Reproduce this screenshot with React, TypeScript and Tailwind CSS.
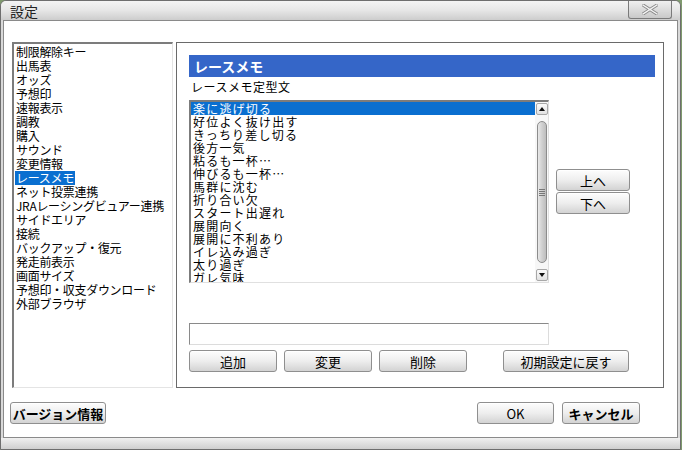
import React from "react";

const font = { fontFamily: '"Noto Sans CJK JP", "Noto Sans", sans-serif' };

const menuItems = [
  "制限解除キー",
  "出馬表",
  "オッズ",
  "予想印",
  "速報表示",
  "調教",
  "購入",
  "サウンド",
  "変更情報",
  "レースメモ",
  "ネット投票連携",
  "JRAレーシングビュアー連携",
  "サイドエリア",
  "接続",
  "バックアップ・復元",
  "発走前表示",
  "画面サイズ",
  "予想印・収支ダウンロード",
  "外部ブラウザ",
];

const memoItems = [
  "楽に逃げ切る",
  "好位よく抜け出す",
  "きっちり差し切る",
  "後方一気",
  "粘るも一杯…",
  "伸びるも一杯…",
  "馬群に沈む",
  "折り合い欠",
  "スタート出遅れ",
  "展開向く",
  "展開に不利あり",
  "イレ込み過ぎ",
  "太り過ぎ",
  "ガレ気味",
];

function Btn({ children, className }: { children: React.ReactNode; className?: string }) {
  return (
    <button
      className={
        "flex h-[22px] items-center justify-center rounded-[3px] border border-[#8f8f8f] bg-gradient-to-b from-[#fdfdfd] via-[#eeeeee] to-[#d3d3d3] text-[13px] leading-none text-black shadow-[inset_0_1px_0_#fff] " +
        (className ?? "")
      }
    >
      {children}
    </button>
  );
}

function ArrowBox({ up }: { up?: boolean }) {
  return (
    <div className="flex h-[12px] w-[12px] items-center justify-center rounded-[2px] border border-[#a8a8a8] bg-gradient-to-b from-[#fbfbfb] to-[#e2e2e2]">
      <svg width="6" height="4" viewBox="0 0 6 4">
        <path d={up ? "M0 4 L3 0 L6 4 Z" : "M0 0 L6 0 L3 4 Z"} fill="#111" />
      </svg>
    </div>
  );
}

export default function App() {
  return (
    <div className="h-[450px] w-[682px] bg-[#7f9a6e]" style={font}>
      <div className="flex h-[450px] w-[681px] flex-col overflow-hidden rounded-t-[6px] border border-[#6e6e6e] bg-[#d9d9d9]">
        {/* title bar */}
        <div className="flex h-[19px] shrink-0 items-center justify-between bg-gradient-to-b from-[#f4f4f4] via-[#e6e6e6] to-[#cdcdcd] pl-[9px]">
          <span className="text-[14px] leading-none text-[#222]">設定</span>
          <div className="mr-[8px] flex h-[18px] w-[44px] -translate-y-[1px] items-center justify-center rounded-b-[3px] border border-t-0 border-[#7a7a7a] bg-gradient-to-b from-[#f0f0f0] to-[#c9c9c9]">
            <svg width="16" height="11" viewBox="0 0 16 11">
              <path d="M1 1 L15 10 M15 1 L1 10" stroke="#8a8a8a" strokeWidth="3.2" strokeLinecap="square" />
              <path d="M1 1 L15 10 M15 1 L1 10" stroke="#f4f4f4" strokeWidth="1.4" strokeLinecap="square" />
            </svg>
          </div>
        </div>

        {/* body */}
        <div className="mx-[2px] flex flex-1 flex-col border border-[#8a8a8a] bg-white">
          <div className="flex gap-[3px] pl-[8px] pt-[21px]">
            {/* left menu */}
            <div className="h-[346px] w-[161px] border-b border-l-2 border-r border-t-2 border-b-[#e4e4e4] border-l-[#7c7c7c] border-r-[#e4e4e4] border-t-[#7c7c7c] pl-[1px] pt-[1px]">
              {menuItems.map((m) => (
                <div key={m} className="flex h-[14px] items-center">
                  <span
                    className={
                      "px-[1px] text-[12px] leading-[14px] tracking-[-0.3px] " +
                      (m === "レースメモ" ? "bg-[#0a6fd0] text-white" : "text-black")
                    }
                  >
                    {m}
                  </span>
                </div>
              ))}
            </div>

            {/* right panel */}
            <div className="flex h-[346px] w-[488px] flex-col border border-[#6a6a6a] pl-[12px] pr-[8px] pt-[12px]">
              <div className="flex h-[22px] items-center bg-[#3566c8] pl-[5px] text-[14px] font-bold text-white">
                レースメモ
              </div>
              <div className="mt-[2px] pl-[2px] text-[12px] leading-[16px] tracking-[0.5px] text-black">
                レースメモ定型文
              </div>
              <div className="mt-[5px] flex gap-[7px]">
                <div className="flex h-[183px] w-[360px] border-b border-l-2 border-r border-t-2 border-b-[#e0e0e0] border-l-[#7c7c7c] border-r-[#e0e0e0] border-t-[#7c7c7c]">
                  <div className="flex-1 overflow-hidden">
                    {memoItems.map((m, i) => (
                      <div
                        key={m}
                        className={
                          "flex h-[13px] items-center pl-[2px] text-[12px] leading-[13px] tracking-[1.2px] " +
                          (i === 0 ? "bg-[#0a6fd0] text-white" : "text-black")
                        }
                      >
                        {m}
                      </div>
                    ))}
                  </div>
                  <div className="flex w-[13px] flex-col items-center justify-between bg-[#f7f7f7] py-[1px]">
                    <ArrowBox up />
                    <div className="flex h-[142px] w-[10px] items-center justify-center rounded-[5px] border border-[#8c8c8c] bg-gradient-to-r from-[#e8e8e8] via-[#d0d0d0] to-[#bdbdbd]">
                      <div className="flex flex-col gap-[1px]">
                        <div className="h-[1px] w-[6px] bg-[#777]" />
                        <div className="h-[1px] w-[6px] bg-[#777]" />
                        <div className="h-[1px] w-[6px] bg-[#777]" />
                        <div className="h-[1px] w-[6px] bg-[#777]" />
                      </div>
                    </div>
                    <ArrowBox />
                  </div>
                </div>
                <div className="flex flex-col gap-[1px] pt-[69px]">
                  <Btn className="w-[74px]">上へ</Btn>
                  <Btn className="w-[74px]">下へ</Btn>
                </div>
              </div>
              <div className="mt-[40px] h-[22px] w-[360px] border border-[#8a8a8a] border-b-[#dcdcdc] border-r-[#dcdcdc]" />
              <div className="mt-[5px] flex">
                <Btn className="w-[88px]">追加</Btn>
                <Btn className="ml-[7px] w-[88px]">変更</Btn>
                <Btn className="ml-[7px] w-[88px]">削除</Btn>
                <Btn className="ml-[36px] w-[126px]">初期設定に戻す</Btn>
              </div>
            </div>
          </div>

          {/* footer buttons */}
          <div className="flex items-center pl-[6px] pt-[14px]">
            <Btn className="w-[96px] font-bold">バージョン情報</Btn>
            <Btn className="ml-auto w-[77px]">OK</Btn>
            <Btn className="ml-[8px] mr-[37px] w-[78px] font-bold">キャンセル</Btn>
          </div>
        </div>

        {/* bottom frame */}
        <div className="h-[11px] shrink-0 bg-gradient-to-b from-[#f0f0f0] to-[#cfcfcf]" />
      </div>
    </div>
  );
}
